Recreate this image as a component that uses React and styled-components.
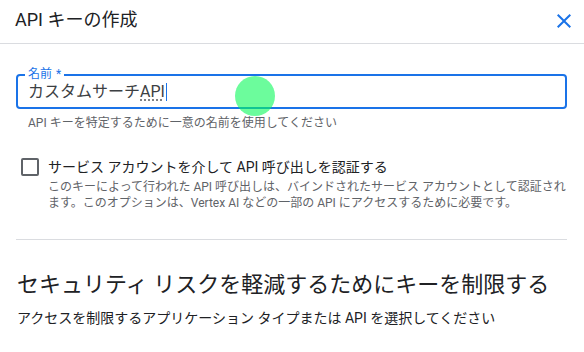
import React from "react";
import styled, { createGlobalStyle } from "styled-components";

const GlobalStyle = createGlobalStyle`
  html, body {
    margin: 0;
    padding: 0;
    background: #ffffff;
  }
  body {
    font-family: Roboto, "Noto Sans CJK JP", "Noto Sans", sans-serif;
    color: #202124;
    -webkit-font-smoothing: antialiased;
  }
`;

function App() {
  return (
    <Dialog>
      <GlobalStyle />
      <Header>
        <Title>API キーの作成</Title>
        <CloseButton aria-label="閉じる">
          <svg width="24" height="24" viewBox="0 0 24 24">
            <path
              d="M19 6.41 17.59 5 12 10.59 6.41 5 5 6.41 10.59 12 5 17.59 6.41 19 12 13.41 17.59 19 19 17.59 13.41 12z"
              fill="#1a73e8"
            />
          </svg>
        </CloseButton>
      </Header>
      <Body>
        <Field>
          <FloatLabel>名前 *</FloatLabel>
          <InputText>
            カスタムサーチ<Composing>API</Composing>
            <Caret />
          </InputText>
          <TouchDot />
        </Field>
        <Helper>API キーを特定するために一意の名前を使用してください</Helper>

        <CheckRow>
          <CheckBox />
          <CheckText>
            <CheckLabel>サービス アカウントを介して API 呼び出しを認証する</CheckLabel>
            <CheckDesc>
              このキーによって行われた API 呼び出しは、バインドされたサービス アカウントとして認証されます。このオプションは、Vertex AI などの一部の API にアクセスするために必要です。
            </CheckDesc>
          </CheckText>
        </CheckRow>

        <Divider />

        <SectionTitle>セキュリティ リスクを軽減するためにキーを制限する</SectionTitle>
        <SectionText>アクセスを制限するアプリケーション タイプまたは API を選択してください</SectionText>
      </Body>
    </Dialog>
  );
}

export default App;

const Dialog = styled.div`
  width: 584px;
  height: 352px;
  overflow: hidden;
  background: #fff;
`;

const Header = styled.div`
  display: flex;
  align-items: center;
  justify-content: space-between;
  height: 44px;
  padding: 0 8px 0 15px;
  border-bottom: 1px solid #dadce0;
  box-sizing: border-box;
  margin-bottom: 1px;
`;

const Title = styled.h1`
  margin: 0;
  margin-top: -3px;
  font-size: 18px;
  font-weight: 400;
  line-height: 24px;
  color: #202124;
`;

const CloseButton = styled.button`
  width: 24px;
  height: 24px;
  padding: 0;
  margin-top: -2px;
  border: 0;
  background: transparent;
  display: flex;
  align-items: center;
  justify-content: center;
  cursor: pointer;
`;

const Body = styled.div`
  padding: 0 17px 0 16px;
`;

const Field = styled.div`
  position: relative;
  margin-top: 30px;
  height: 35px;
  box-sizing: border-box;
  border: 2px solid #1a73e8;
  border-radius: 4px;
  padding: 0 10px;
  display: flex;
  align-items: center;
`;

const FloatLabel = styled.span`
  position: absolute;
  left: 7px;
  top: -8px;
  padding: 0 3px;
  background: #fff;
  font-size: 12px;
  line-height: 12px;
  color: #1a73e8;
  word-spacing: 1px;
`;

const InputText = styled.div`
  display: flex;
  align-items: center;
  font-size: 16px;
  line-height: 20px;
  color: #3c4043;
`;

const Composing = styled.span`
  text-decoration: underline dotted #5f6368;
  text-underline-offset: 3px;
`;

const Caret = styled.span`
  display: inline-block;
  width: 1.5px;
  height: 18px;
  margin-left: 1px;
  background: #1a73e8;
`;

const TouchDot = styled.span`
  position: absolute;
  left: 217px;
  top: 0;
  width: 40px;
  height: 40px;
  border-radius: 50%;
  background: rgba(10, 250, 90, 0.6);
  pointer-events: none;
`;

const Helper = styled.div`
  margin-top: 6px;
  padding-left: 12px;
  font-size: 12px;
  line-height: 16px;
  color: #5f6368;
`;

const CheckRow = styled.div`
  display: flex;
  align-items: flex-start;
  gap: 9px;
  margin-top: 26px;
  padding-left: 5px;
`;

const CheckBox = styled.span`
  flex: none;
  width: 18px;
  height: 18px;
  margin-top: 1px;
  box-sizing: border-box;
  border: 2px solid #5f6368;
  border-radius: 2px;
`;

const CheckText = styled.div`
  display: flex;
  flex-direction: column;
  gap: 2px;
`;

const CheckLabel = styled.div`
  font-size: 14px;
  line-height: 20px;
  color: #202124;
`;

const CheckDesc = styled.div`
  font-size: 12px;
  line-height: 16px;
  color: #5f6368;
`;

const Divider = styled.hr`
  margin: 28px 0 0;
  border: 0;
  border-top: 1px solid #dadce0;
  height: 0;
`;

const SectionTitle = styled.h2`
  margin: 31px 0 0 1px;
  font-size: 22px;
  font-weight: 400;
  line-height: 28px;
  color: #202124;
`;

const SectionText = styled.p`
  margin: 9px 0 0 1px;
  font-size: 14px;
  line-height: 20px;
  color: #202124;
`;
